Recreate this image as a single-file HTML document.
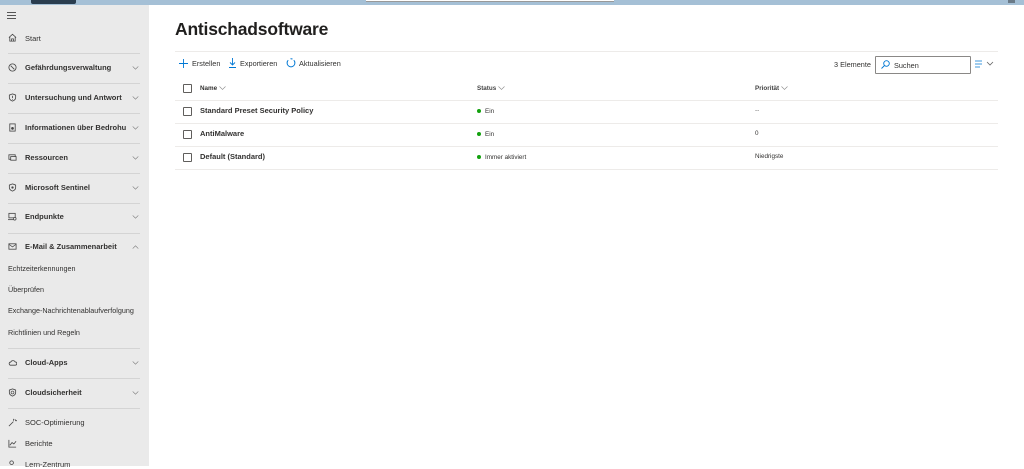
<!DOCTYPE html>
<html><head><meta charset="utf-8"><style>
*{margin:0;padding:0;box-sizing:border-box}
body{width:1024px;height:466px;overflow:hidden;background:#fff;font-family:"Liberation Sans",sans-serif;color:#323130;position:relative}
.a{position:absolute;white-space:nowrap}
#top{left:0;top:0;width:1024px;height:5px;background:#a5c0d6}
#side{left:0;top:5px;width:149px;height:461px;background:#eaeaea}
.sep{position:absolute;left:8px;width:132px;height:1px;background:#d4d4d4}
.nav{position:absolute;left:25px;font-size:7.5px;font-weight:bold;color:#323130}
.sub{position:absolute;left:8px;font-size:7.2px;color:#323130}
.ic{position:absolute;left:8px;width:9px;height:9px}
.chev{position:absolute;left:132px;width:7px;height:4px}
.cb{position:absolute;left:183px;width:9px;height:9px;border:1px solid #605e5c;border-radius:1px}
.hl{position:absolute;left:175px;width:823px;height:1px;background:#edebe9}
.t{font-size:7.3px;color:#323130}
.dot{display:inline-block;width:4px;height:4px;border-radius:50%;background:#13a10e;margin-right:4px;vertical-align:middle}
.hc{display:inline-block;vertical-align:middle;margin-left:2px}
</style></head><body>
<div class="a" id="top"></div>
<div class="a" style="left:31px;top:0;width:45px;height:4px;background:#2a3d4f;border-radius:0 0 2px 2px"></div>
<div class="a" style="left:366px;top:0;width:248px;height:2px;background:#fff;border-bottom:1px solid #999"></div>
<div class="a" style="left:1008px;top:0;width:7px;height:3px;background:#6a7a88"></div>
<div class="a" id="side">
<svg class="a" style="left:7px;top:7px" width="9" height="7"><path d="M0 .5h9M0 3.5h9M0 6.5h9" stroke="#555" stroke-width="1"/></svg>
</div>
<svg class="ic" style="top:33px" viewBox="0 0 10 10"><path d="M1 5L5 1.5 9 5M2 4.3V9h6V4.3M4 9V6.5h2V9" fill="none" stroke="#444" stroke-width=".9"/></svg>
<div class="a sub" style="left:25px;top:34px;font-size:7.5px">Start</div>
<div class="sep" style="top:53px"></div><div class="sep" style="top:83px"></div><div class="sep" style="top:113px"></div><div class="sep" style="top:143px"></div><div class="sep" style="top:173px"></div><div class="sep" style="top:203px"></div><div class="sep" style="top:233px"></div><div class="sep" style="top:348px"></div><div class="sep" style="top:378px"></div><div class="sep" style="top:408px"></div>
<svg class="ic" style="top:63px" viewBox="0 0 10 10"><circle cx="5" cy="5" r="4" fill="none" stroke="#444" stroke-width=".9"/><path d="M3 3l4 4" stroke="#444" stroke-width=".9"/></svg>
<div class="nav" style="top:63px">Gefährdungsverwaltung</div>
<svg class="ic" style="top:93px" viewBox="0 0 10 10"><path d="M5 1l3.5 1.3V5C8.5 7 7 8.3 5 9 3 8.3 1.5 7 1.5 5V2.3z" fill="none" stroke="#444" stroke-width=".9"/><path d="M5 3v2.5M5 6.5v.8" stroke="#444" stroke-width=".9"/></svg>
<div class="nav" style="top:93px">Untersuchung und Antwort</div>
<svg class="ic" style="top:123px" viewBox="0 0 10 10"><rect x="2" y="1" width="6" height="8" fill="none" stroke="#444" stroke-width=".9"/><circle cx="5" cy="6" r="1.5" fill="#444"/></svg>
<div class="nav" style="top:123px">Informationen über Bedrohu</div>
<svg class="ic" style="top:153px" viewBox="0 0 10 10"><rect x="1" y="2" width="7" height="5" fill="none" stroke="#444" stroke-width=".9"/><rect x="3" y="4" width="6" height="4" fill="#eaeaea" stroke="#444" stroke-width=".9"/></svg>
<div class="nav" style="top:153px">Ressourcen</div>
<svg class="ic" style="top:183px" viewBox="0 0 10 10"><path d="M5 1l3.5 1.3V5C8.5 7 7 8.3 5 9 3 8.3 1.5 7 1.5 5V2.3z" fill="none" stroke="#444" stroke-width=".9"/><circle cx="5" cy="5" r="1.3" fill="#444"/></svg>
<div class="nav" style="top:183px">Microsoft Sentinel</div>
<svg class="ic" style="top:212px" viewBox="0 0 10 10"><rect x="1" y="1.5" width="7" height="5" fill="none" stroke="#444" stroke-width=".9"/><path d="M0 8.5h6" stroke="#444" stroke-width=".9"/><circle cx="7.5" cy="7.5" r="1.5" fill="#eaeaea" stroke="#444" stroke-width=".8"/></svg>
<div class="nav" style="top:212px">Endpunkte</div>
<svg class="ic" style="top:242px" viewBox="0 0 10 10"><rect x="1" y="2" width="8" height="6" fill="none" stroke="#444" stroke-width=".9"/><path d="M1 2.5l4 3 4-3" fill="none" stroke="#444" stroke-width=".8"/></svg>
<div class="nav" style="top:242px">E-Mail &amp; Zusammenarbeit</div>
<div class="sub" style="top:264px">Echtzeiterkennungen</div>
<div class="sub" style="top:285px">Überprüfen</div>
<div class="sub" style="top:306px">Exchange-Nachrichtenablaufverfolgung</div>
<div class="sub" style="top:328px">Richtlinien und Regeln</div>
<svg class="ic" style="top:358px" viewBox="0 0 10 10"><path d="M2.5 8h5.5a1.8 1.8 0 000-3.6A2.8 2.8 0 003 4.5 1.8 1.8 0 002.5 8z" fill="none" stroke="#444" stroke-width=".9"/></svg>
<div class="nav" style="top:358px">Cloud-Apps</div>
<svg class="ic" style="top:388px" viewBox="0 0 10 10"><path d="M5 1l3.5 1.3V5C8.5 7 7 8.3 5 9 3 8.3 1.5 7 1.5 5V2.3z" fill="none" stroke="#444" stroke-width=".9"/><circle cx="5" cy="5" r="1.6" fill="none" stroke="#444" stroke-width=".7"/></svg>
<div class="nav" style="top:388px">Cloudsicherheit</div>
<svg class="ic" style="top:418px" viewBox="0 0 10 10"><path d="M1 9l5-5M6 1v2M8 3h2M7.5 1.5l1 1" stroke="#444" stroke-width=".9"/></svg>
<div class="sub" style="left:25px;top:418px;font-size:7.5px">SOC-Optimierung</div>
<svg class="ic" style="top:439px" viewBox="0 0 10 10"><path d="M1 1v8h8M2 7l2.5-3 2 1.5L9 2.5" fill="none" stroke="#444" stroke-width=".9"/></svg>
<div class="sub" style="left:25px;top:439px;font-size:7.5px">Berichte</div>
<svg class="ic" style="top:460px" viewBox="0 0 10 10"><circle cx="4" cy="3" r="2" fill="none" stroke="#444" stroke-width=".9"/></svg>
<div class="sub" style="left:25px;top:460px;font-size:7.5px">Lern-Zentrum</div>
<svg class="chev" style="top:66px" viewBox="0 0 8 5"><path d="M.5 .5L4 4 7.5 .5" fill="none" stroke="#777" stroke-width=".7"/></svg>
<svg class="chev" style="top:96px" viewBox="0 0 8 5"><path d="M.5 .5L4 4 7.5 .5" fill="none" stroke="#777" stroke-width=".7"/></svg>
<svg class="chev" style="top:126px" viewBox="0 0 8 5"><path d="M.5 .5L4 4 7.5 .5" fill="none" stroke="#777" stroke-width=".7"/></svg>
<svg class="chev" style="top:156px" viewBox="0 0 8 5"><path d="M.5 .5L4 4 7.5 .5" fill="none" stroke="#777" stroke-width=".7"/></svg>
<svg class="chev" style="top:186px" viewBox="0 0 8 5"><path d="M.5 .5L4 4 7.5 .5" fill="none" stroke="#777" stroke-width=".7"/></svg>
<svg class="chev" style="top:215px" viewBox="0 0 8 5"><path d="M.5 .5L4 4 7.5 .5" fill="none" stroke="#777" stroke-width=".7"/></svg>
<svg class="chev" style="top:245px" viewBox="0 0 8 5"><path d="M.5 4.5L4 1 7.5 4.5" fill="none" stroke="#777" stroke-width=".7"/></svg>
<svg class="chev" style="top:361px" viewBox="0 0 8 5"><path d="M.5 .5L4 4 7.5 .5" fill="none" stroke="#777" stroke-width=".7"/></svg>
<svg class="chev" style="top:391px" viewBox="0 0 8 5"><path d="M.5 .5L4 4 7.5 .5" fill="none" stroke="#777" stroke-width=".7"/></svg>

<div class="a" style="left:175px;top:19px;font-size:17.5px;font-weight:bold;color:#201f1e;letter-spacing:-0.2px">Antischadsoftware</div>
<div class="hl" style="top:51px"></div>
<svg class="a" style="left:179px;top:59px" width="9" height="9"><path d="M4.5 0v9M0 4.5h9" stroke="#0078d4" stroke-width=".9"/></svg>
<div class="a t" style="left:192px;top:59px">Erstellen</div>
<svg class="a" style="left:229px;top:58px" width="7" height="10"><path d="M3.5 0v7M1 4.5l2.5 2.5L6 4.5M0 9.5h7" fill="none" stroke="#0078d4" stroke-width=".9"/></svg>
<div class="a t" style="left:240px;top:59px">Exportieren</div>
<svg class="a" style="left:286px;top:58px" width="10" height="10"><path d="M7.8 2.2A3.9 3.9 0 1 1 2.2 2.2" fill="none" stroke="#0078d4" stroke-width="1"/><path d="M4.5 0.7A3.9 3.9 0 0 1 6.5 1.1" fill="none" stroke="#0078d4" stroke-width="1"/></svg>
<div class="a t" style="left:299px;top:59px">Aktualisieren</div>
<div class="a t" style="left:834px;top:60px">3 Elemente</div>
<div class="a" style="left:875px;top:56px;width:96px;height:18px;border:1px solid #8a8886;border-radius:1px"></div>
<svg class="a" style="left:881px;top:60px" width="9" height="9"><circle cx="5.5" cy="3.5" r="2.8" fill="none" stroke="#0078d4" stroke-width=".9"/><path d="M3.5 5.5L.5 8.5" stroke="#0078d4" stroke-width=".9"/></svg>
<div class="a t" style="left:894px;top:61px">Suchen</div>
<svg class="a" style="left:975px;top:60px" width="20" height="8"><path d="M0 1h7M0 4h7M0 7h5" stroke="#0078d4" stroke-width=".8"/><path d="M12 2l3 3 3-3" fill="none" stroke="#666" stroke-width=".8"/></svg>

<div class="cb" style="top:84px"></div>
<div class="a" style="left:200px;top:85px;font-size:6.3px;font-weight:bold">Name<svg class="hc" width="7" height="4"><path d="M.5 .5L3.5 3.5 6.5 .5" fill="none" stroke="#888" stroke-width=".6"/></svg></div>
<div class="a" style="left:477px;top:85px;font-size:6.3px;font-weight:bold;color:#444">Status<svg class="hc" width="7" height="4"><path d="M.5 .5L3.5 3.5 6.5 .5" fill="none" stroke="#888" stroke-width=".6"/></svg></div>
<div class="a" style="left:755px;top:85px;font-size:6.3px;font-weight:bold;color:#444">Priorität<svg class="hc" width="7" height="4"><path d="M.5 .5L3.5 3.5 6.5 .5" fill="none" stroke="#888" stroke-width=".6"/></svg></div>
<div class="hl" style="top:100px"></div>
<div class="cb" style="top:107px"></div>
<div class="a" style="left:200px;top:106px;font-size:7.5px;font-weight:bold">Standard Preset Security Policy</div>
<div class="a" style="left:477px;top:108px;font-size:6.3px"><span class="dot"></span>Ein</div>
<div class="a" style="left:755px;top:107px;font-size:6.3px;color:#666">--</div>
<div class="hl" style="top:123px"></div>
<div class="cb" style="top:130px"></div>
<div class="a" style="left:200px;top:129px;font-size:7.5px;font-weight:bold">AntiMalware</div>
<div class="a" style="left:477px;top:131px;font-size:6.3px"><span class="dot"></span>Ein</div>
<div class="a" style="left:755px;top:130px;font-size:6.3px">0</div>
<div class="hl" style="top:146px"></div>
<div class="cb" style="top:153px"></div>
<div class="a" style="left:200px;top:152px;font-size:7.5px;font-weight:bold">Default (Standard)</div>
<div class="a" style="left:477px;top:154px;font-size:6.3px"><span class="dot"></span>Immer aktiviert</div>
<div class="a" style="left:755px;top:153px;font-size:6.3px">Niedrigste</div>
<div class="hl" style="top:169px"></div>
</body></html>
